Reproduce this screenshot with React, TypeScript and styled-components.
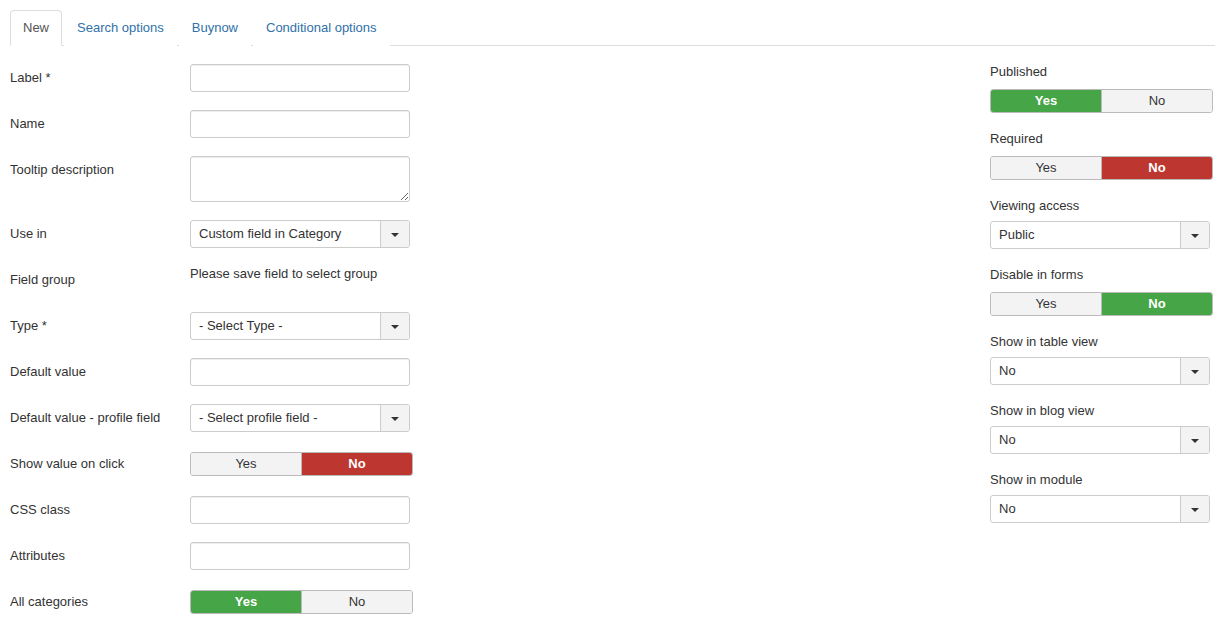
import React from 'react';
import styled, {createGlobalStyle} from "styled-components";

const GlobalStyle = createGlobalStyle`
  body {
    margin: 0;
    background: #fff;
    font-family: "Liberation Sans", Arial, sans-serif;
    font-size: 13px;
    color: #333;
  }
`;

type Opt = "yes" | "no";
type Tone = "green" | "red";

type RowDef = {label: string; kind: string; value?: string; active?: Opt; tone?: Tone};

const leftRows: RowDef[] = [
    {label: "Label *", kind: "input"},
    {label: "Name", kind: "input"},
    {label: "Tooltip description", kind: "textarea"},
    {label: "Use in", kind: "select", value: "Custom field in Category"},
    {label: "Field group", kind: "text", value: "Please save field to select group"},
    {label: "Type *", kind: "select", value: "- Select Type -"},
    {label: "Default value", kind: "input"},
    {label: "Default value - profile field", kind: "select", value: "- Select profile field -"},
    {label: "Show value on click", kind: "switch", active: "no", tone: "red"},
    {label: "CSS class", kind: "input"},
    {label: "Attributes", kind: "input"},
    {label: "All categories", kind: "switch", active: "yes", tone: "green"},
];

const rightRows: RowDef[] = [
    {label: "Published", kind: "switch", active: "yes", tone: "green"},
    {label: "Required", kind: "switch", active: "no", tone: "red"},
    {label: "Viewing access", kind: "select", value: "Public"},
    {label: "Disable in forms", kind: "switch", active: "no", tone: "green"},
    {label: "Show in table view", kind: "select", value: "No"},
    {label: "Show in blog view", kind: "select", value: "No"},
    {label: "Show in module", kind: "select", value: "No"},
];

const Switcher = ({active, tone = "green"}: {active?: Opt; tone?: Tone}) => (
    <SwitchWrap>
        <SwitchBtn on={active === "yes"} tone={tone}>Yes</SwitchBtn>
        <SwitchBtn on={active === "no"} tone={tone}>No</SwitchBtn>
    </SwitchWrap>
);

const Select = ({value}: {value?: string}) => (
    <SelectBox>
        <SelectText>{value}</SelectText>
        <SelectArrow><Caret/></SelectArrow>
    </SelectBox>
);

const renderControl = (r: RowDef) => {
    if (r.kind === "input") return <Input type="text"/>;
    if (r.kind === "textarea") return <TextArea/>;
    if (r.kind === "select") return <Select value={r.value}/>;
    if (r.kind === "switch") return <Switcher active={r.active} tone={r.tone}/>;
    return <StaticText>{r.value}</StaticText>;
};

const App = () => {
    return (
        <>
            <GlobalStyle/>
            <Page>
                <Tabs>
                    <Tab active>New</Tab>
                    <Tab>Search options</Tab>
                    <Tab>Buynow</Tab>
                    <Tab>Conditional options</Tab>
                </Tabs>
                <Content>
                    <Main>
                        {leftRows.map((r) => (
                            <Row key={r.label}>
                                <RowLabel>{r.label}</RowLabel>
                                <Controls>{renderControl(r)}</Controls>
                            </Row>
                        ))}
                    </Main>
                    <Side>
                        {rightRows.map((r) => (
                            <SideGroup key={r.label}>
                                <SideLabel>{r.label}</SideLabel>
                                {renderControl(r)}
                            </SideGroup>
                        ))}
                    </Side>
                </Content>
            </Page>
        </>
    );
};

const Page = styled.div`
  padding: 10px 0 0 10px;
`

const Tabs = styled.ul`
  display: flex;
  list-style: none;
  margin: 0;
  padding: 0;
  border-bottom: 1px solid #ddd;
`

const Tab = styled.li<{active?: boolean}>`
  padding: 8px 12px;
  line-height: 18px;
  margin-right: 2px;
  margin-bottom: -1px;
  border: 1px solid ${(p) => p.active ? "#ddd" : "transparent"};
  border-bottom-color: ${(p) => p.active ? "#fff" : "transparent"};
  border-radius: 4px 4px 0 0;
  background: #fff;
  color: ${(p) => p.active ? "#555" : "#3071a9"};
  cursor: pointer;
`

const Content = styled.div`
  display: grid;
  grid-template-columns: 1fr 225px;
  padding-top: 18px;
`

const Main = styled.div`
  display: flex;
  flex-direction: column;
  gap: 18px;
`

const Row = styled.div`
  display: flex;
  min-height: 28px;
`

const RowLabel = styled.div`
  width: 180px;
  padding-top: 5px;
  line-height: 18px;
`

const Controls = styled.div`
  display: flex;
  flex-direction: column;
`

const Input = styled.input`
  box-sizing: border-box;
  width: 220px;
  height: 28px;
  margin: 0;
  border: 1px solid #ccc;
  border-radius: 3px;
  padding: 4px 8px;
  font: inherit;
  box-shadow: inset 0 1px 1px rgba(0,0,0,.075);
`

const TextArea = styled.textarea`
  box-sizing: border-box;
  width: 220px;
  height: 46px;
  margin: 0;
  border: 1px solid #ccc;
  border-radius: 3px;
  padding: 4px 8px;
  font: inherit;
  box-shadow: inset 0 1px 1px rgba(0,0,0,.075);
`

const StaticText = styled.div`
  line-height: 18px;
  margin-top: -1px;
`

const SelectBox = styled.div`
  box-sizing: border-box;
  width: 220px;
  height: 28px;
  display: flex;
  border: 1px solid #ccc;
  border-radius: 3px;
  background: #fff;
  overflow: hidden;
`

const SelectText = styled.div`
  flex: 1;
  padding-left: 8px;
  line-height: 26px;
  white-space: nowrap;
`

const SelectArrow = styled.div`
  width: 28px;
  border-left: 1px solid #ccc;
  background: #f3f3f3;
  display: flex;
  align-items: center;
  justify-content: center;
`

const Caret = styled.span`
  width: 0;
  height: 0;
  border-left: 4px solid transparent;
  border-right: 4px solid transparent;
  border-top: 4px solid #333;
  margin-top: 1px;
`

const SwitchWrap = styled.div`
  box-sizing: border-box;
  display: flex;
  width: 223px;
  height: 24px;
  margin-top: 2px;
  border: 1px solid #bbb;
  border-radius: 3px;
  overflow: hidden;
`

const SwitchBtn = styled.div<{on?: boolean; tone: Tone}>`
  flex: 1;
  text-align: center;
  line-height: 22px;
  background: ${(p) => !p.on ? "#f3f3f3" : p.tone === "green" ? "#46a546" : "#bd362f"};
  color: ${(p) => p.on ? "#fff" : "#333"};
  font-weight: ${(p) => p.on ? 700 : 400};
  & + & {
    border-left: 1px solid #bbb;
  }
`

const Side = styled.div`
  display: flex;
  flex-direction: column;
  gap: 17px;
  margin-top: -1px;
`

const SideGroup = styled.div`
  display: flex;
  flex-direction: column;
`

const SideLabel = styled.div`
  line-height: 18px;
  margin-bottom: 6px;
`

export default App;
